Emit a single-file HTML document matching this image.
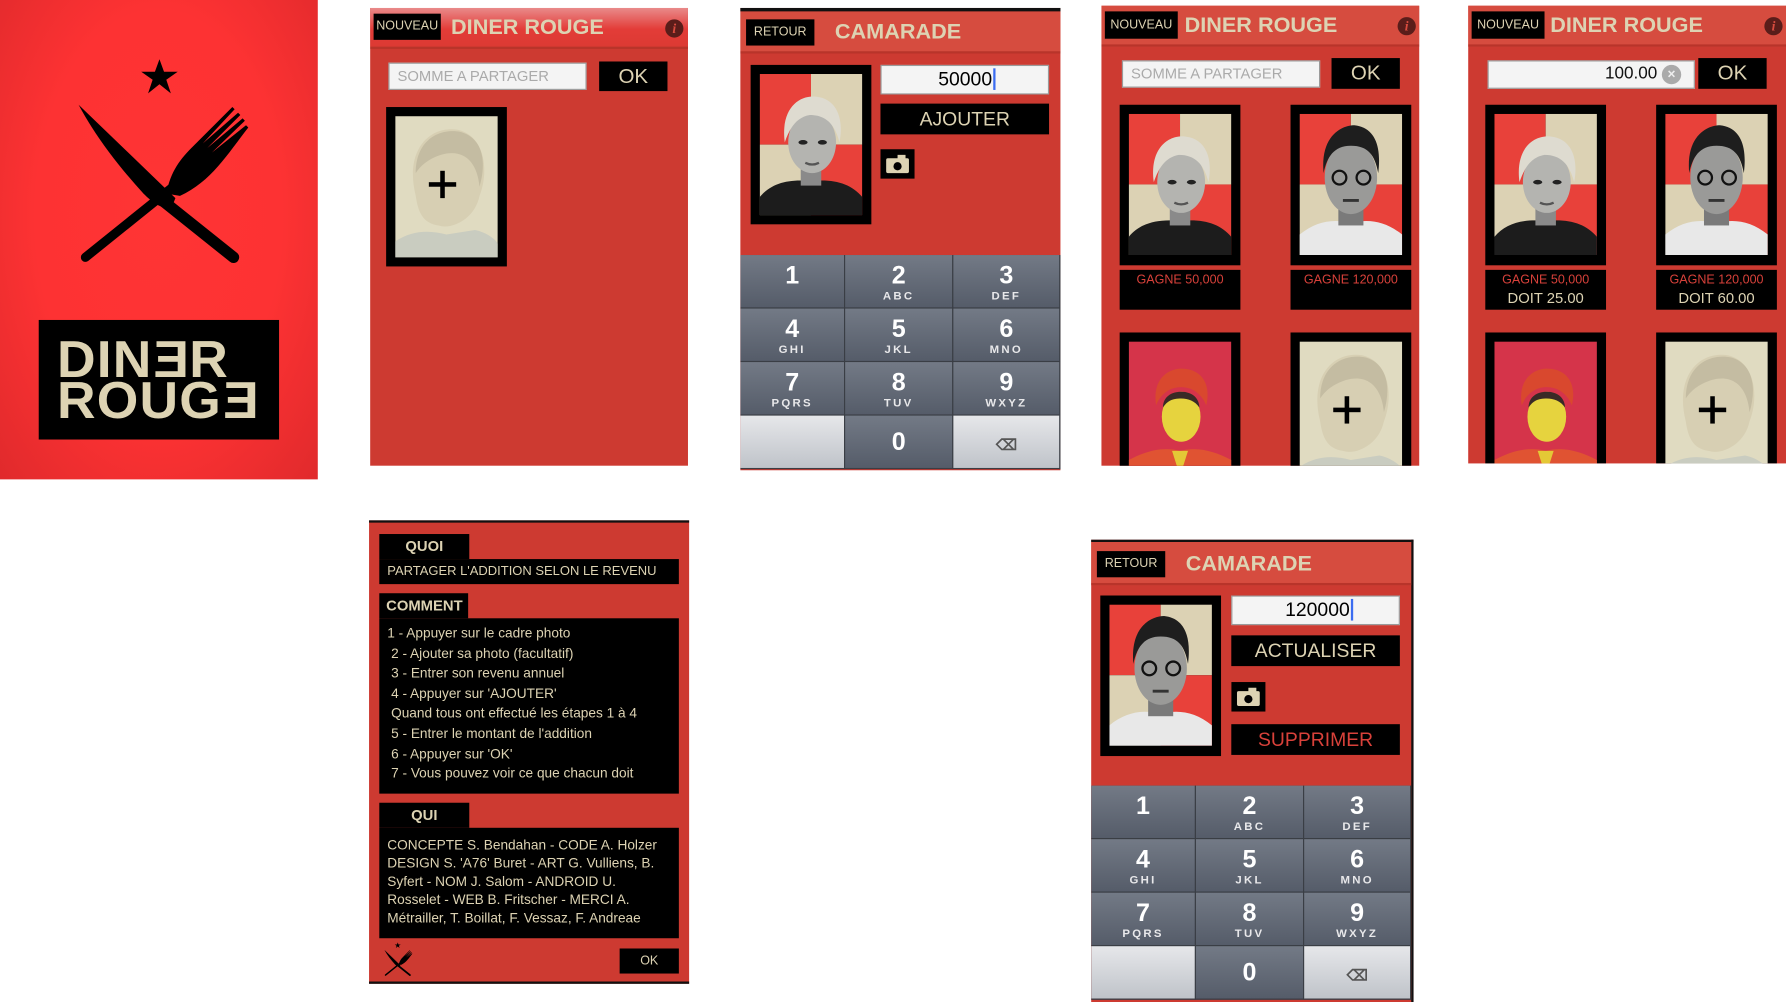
<!DOCTYPE html>
<html><head><meta charset="utf-8">
<style>
*{margin:0;padding:0;box-sizing:border-box}
html,body{width:1786px;height:1002px;overflow:hidden;background:#fff}
#w{position:absolute;left:0;top:0;width:1568px;height:880px;transform:scale(1.13903,1.13864);transform-origin:0 0;font-family:"Liberation Sans",sans-serif}
.a{position:absolute}
.scr{position:absolute;background:#cd3a31;overflow:hidden}
.hdr{position:absolute;left:0;right:0;top:0;height:36px;background:linear-gradient(#e06a5e,#d84c3f 60%,#d8463a);border-bottom:2px solid #b8342a}
.hdr2{background:#d64c3f}
.bk{position:absolute;background:#000;color:#ddd3b3;text-align:center}
.ttl{position:absolute;color:#ddd3b3;font-weight:bold;font-size:19px}
.info{position:absolute;width:16px;height:16px;border-radius:50%;background:#5a1d1a;color:#d84c3f;font:italic bold 12px "Liberation Serif",serif;text-align:center;line-height:16px}
.inp{position:absolute;background:#f4f4f4;border:1.5px solid #9a9a9a;color:#aaa;font-size:13px;line-height:21px;padding-left:7px}
.card{position:absolute;background:#000;width:106px;height:141px}
.card svg{position:absolute;left:8px;top:8px;width:90px;height:124px}
.kp{position:absolute;display:grid;grid-template-columns:92px 95px 94px;grid-template-rows:repeat(4,47px);gap:0;background:#3a3e45}
.kp div{background:linear-gradient(#737a86,#555c69);color:#fff;text-align:center;border-right:1px solid #3a3e45;border-bottom:1px solid #3a3e45;font-weight:bold;font-size:22px;line-height:22px;padding-top:7px}
.kp div small{display:block;font-size:10px;line-height:11px;letter-spacing:2px;color:#e8e8ea;margin-top:2px}
.kp div.l{background:linear-gradient(#e6e7ea,#bfc3c9)}
.lab{position:absolute;background:#000;width:106px;height:35px;text-align:center;font-size:11px}
.lab .r{color:#d8413a;margin-top:3px}
.lab .d{color:#ddd3b3;font-size:13px;margin-top:2px}
.help .t{position:absolute;background:#000;color:#ddd3b3;font-weight:bold;font-size:13px}
.help .b{position:absolute;background:#000;color:#ddd3b3;font-size:12px;white-space:nowrap}
</style></head><body>
<svg width="0" height="0" style="position:absolute">
<defs>
<symbol id="wom" viewBox="0 0 90 124">
<rect width="45" height="62" fill="#e8413a"/><rect x="45" width="45" height="62" fill="#dcd2b4"/>
<rect y="62" width="45" height="62" fill="#dcd2b4"/><rect x="45" y="62" width="45" height="62" fill="#e8413a"/>
<path d="M0,124 L0,108 C10,96 25,92 45,94 C65,92 80,96 90,108 L90,124Z" fill="#1c1c1c"/>
<rect x="36" y="80" width="18" height="18" fill="#8a8a8a"/>
<ellipse cx="46" cy="60" rx="21" ry="27" fill="#b4b4b0"/>
<path d="M22,60 C18,30 35,18 50,20 C68,22 74,40 70,60 C66,44 58,36 44,36 C32,38 26,48 22,60Z" fill="#dedbd0"/>
<ellipse cx="38" cy="60" rx="4" ry="2" fill="#222"/><ellipse cx="55" cy="60" rx="4" ry="2" fill="#222"/>
<path d="M40,78 Q46,81 52,78" stroke="#555" stroke-width="2" fill="none"/>
</symbol>
<symbol id="man" viewBox="0 0 90 124">
<rect width="45" height="62" fill="#e8413a"/><rect x="45" width="45" height="62" fill="#dcd2b4"/>
<rect y="62" width="45" height="62" fill="#dcd2b4"/><rect x="45" y="62" width="45" height="62" fill="#e8413a"/>
<path d="M0,124 L0,106 C15,94 30,92 45,96 C60,92 75,94 90,106 L90,124Z" fill="#e8e8e8"/>
<rect x="34" y="80" width="22" height="18" fill="#7a7a7a"/>
<ellipse cx="45" cy="56" rx="23" ry="32" fill="#9a9a98"/>
<path d="M21,52 C18,18 38,10 48,10 C66,12 72,28 69,52 C66,36 60,28 45,28 C30,28 24,38 21,52Z" fill="#1e1e1e"/>
<circle cx="35" cy="56" r="6" fill="none" stroke="#111" stroke-width="2"/><circle cx="56" cy="56" r="6" fill="none" stroke="#111" stroke-width="2"/>
<path d="M38,76 L52,76" stroke="#333" stroke-width="2.5"/>
</symbol>
<symbol id="ph" viewBox="0 0 90 124">
<rect width="90" height="124" fill="#e0dbc1"/>
<path d="M18,70 C8,30 30,8 55,12 C80,18 82,50 74,70 C70,90 50,100 38,96 C24,94 20,84 18,70Z" fill="#d7cfb3"/>
<path d="M18,50 C18,20 40,10 58,14 C78,20 80,42 74,62 C72,40 60,28 40,34 C28,38 22,44 18,50Z" fill="#c4bca2"/>
<path d="M0,124 L0,110 C15,100 30,100 45,104 L70,100 C80,102 88,108 90,112 L90,124Z" fill="#c9ccc0"/>
<rect x="39.5" y="48" width="4" height="24" fill="#000"/><rect x="29.5" y="58" width="24" height="4" fill="#000"/>
</symbol>
<symbol id="pt" viewBox="0 0 90 124">
<rect width="90" height="124" fill="#d5344a"/>
<path d="M0,124 L0,104 C15,96 30,92 45,96 C60,92 75,96 90,104 L90,124Z" fill="#e05332"/>
<path d="M38,96 L45,118 L52,96Z" fill="#e4c836"/>
<ellipse cx="46" cy="66" rx="17" ry="22" fill="#e6d33e"/>
<path d="M24,56 C20,30 38,22 50,24 C66,26 72,40 68,56 C64,46 56,40 46,40 C36,40 28,46 24,56Z" fill="#d9482e"/>
<path d="M30,58 C30,48 38,44 46,44 C56,44 62,50 62,58 C58,52 52,50 46,50 C38,50 34,52 30,58Z" fill="#3a2a26"/>
</symbol>
<symbol id="cam" viewBox="0 0 30 26">
<rect width="30" height="26" fill="#000"/>
<rect x="5" y="8" width="20" height="13" rx="1.5" fill="#ddd3b3"/><rect x="15" y="5" width="7" height="4" fill="#ddd3b3"/>
<circle cx="15" cy="15" r="3.6" fill="#000"/>
</symbol>
<symbol id="kf" viewBox="60 50 170 190">
<polygon points="140,52 144,63 156,63 146,70 150,82 140,74 130,82 134,70 124,63 136,63" fill="#000"/>
<path d="M69,92 L154,174 L150,184 C140,182 134,178 126,170 C104,146 84,120 69,92Z" fill="#000"/>
<line x1="145" y1="178" x2="205" y2="226" stroke="#000" stroke-width="10" stroke-linecap="round"/>
<line x1="75" y1="226" x2="152" y2="164" stroke="#000" stroke-width="8" stroke-linecap="round"/>
<path d="M146,170 C150,150 158,140 170,128 L204,94 L206,96 L178,126 L209,99 L211,101 L182,130 L213,104 L215,106 L186,134 L216,110 L218,112 C200,135 185,160 158,172Z" fill="#000"/>
</symbol>
</defs></svg>
<div id="w">

<!-- Splash -->
<div class="a" style="left:0;top:0;width:279px;height:421px;background:radial-gradient(ellipse at 50% 45%,#ff3434 0%,#fd3233 55%,#e02a2c 100%)">
<svg class="a" style="left:60px;top:50px;width:170px;height:190px"><use href="#kf"/></svg>
<div class="a" style="left:34px;top:281px;width:211px;height:105px;background:#000;color:#ddd3b3;font-weight:bold;font-size:46px;line-height:36px;letter-spacing:1px;padding:16px 0 0 16px">
<div style="transform:scaleX(1.02);transform-origin:0 0;white-space:nowrap">DIN<span style="display:inline-block;transform:scaleX(-1)">E</span>R</div>
<div style="transform:scaleX(1.02);transform-origin:0 0;white-space:nowrap">ROUG<span style="display:inline-block;transform:scaleX(-1)">E</span></div>
</div>
</div>

<!-- Screen B -->
<div class="scr" style="left:325px;top:7px;width:279px;height:402px">
<div class="hdr" style="background:linear-gradient(#e98a8a,#e33c38 55%,#dc3a33)"></div>
<div class="bk" style="left:3px;top:5px;width:59px;height:23px;font-size:11px;line-height:23px">NOUVEAU</div>
<div class="ttl" style="left:71px;top:7px">DINER ROUGE</div>
<div class="info" style="left:259px;top:10px">i</div>
<div class="inp" style="left:16px;top:48px;width:174px;height:24px">SOMME A PARTAGER</div>
<div class="bk" style="left:201px;top:47px;width:60px;height:26px;font-size:18px;line-height:26px">OK</div>
<div class="card" style="left:14px;top:87px;height:140px"><svg><use href="#ph"/></svg></div>
</div>

<!-- Screen C -->
<div class="scr" style="left:650px;top:7px;width:281px;height:406px;border-top:3px solid #111">
<div class="hdr hdr2" style="height:37px"></div>
<div class="bk" style="left:5px;top:7px;width:60px;height:23px;font-size:11px;line-height:23px">RETOUR</div>
<div class="ttl" style="left:83px;top:8px">CAMARADE</div>
<div class="card" style="left:9px;top:47px;height:140px"><svg><use href="#wom"/></svg></div>
<div class="inp" style="left:123px;top:47px;width:148px;height:26px;color:#000;font-size:17px;line-height:23px;text-align:right;padding-right:46px">50000<span style="border-left:2px solid #3b6cf0;margin-left:1px"></span></div>
<div class="bk" style="left:123px;top:81px;width:148px;height:27px;font-size:17px;line-height:27px">AJOUTER</div>
<svg class="a" style="left:123px;top:121px;width:30px;height:26px"><use href="#cam"/></svg>
<div class="kp" style="left:0;top:214px"><div>1</div><div>2<small>ABC</small></div><div>3<small>DEF</small></div><div>4<small>GHI</small></div><div>5<small>JKL</small></div><div>6<small>MNO</small></div><div>7<small>PQRS</small></div><div>8<small>TUV</small></div><div>9<small>WXYZ</small></div><div class="l"></div><div style="padding-top:12px">0</div><div class="l" style="color:#555;font-size:13px;padding-top:15px">&#9003;</div></div>
</div>

<!-- Screen D -->
<div class="scr" style="left:967px;top:5px;width:279px;height:404px">
<div class="hdr hdr2"></div>
<div class="bk" style="left:3px;top:5px;width:64px;height:24px;font-size:11px;line-height:24px">NOUVEAU</div>
<div class="ttl" style="left:73px;top:7px">DINER ROUGE</div>
<div class="info" style="left:260px;top:10px">i</div>
<div class="inp" style="left:18px;top:48px;width:174px;height:24px">SOMME A PARTAGER</div>
<div class="bk" style="left:202px;top:46px;width:60px;height:27px;font-size:18px;line-height:27px">OK</div>
<div class="card" style="left:16px;top:87px"><svg><use href="#wom"/></svg></div>
<div class="card" style="left:166px;top:87px"><svg><use href="#man"/></svg></div>
<div class="lab" style="left:16px;top:232px"><div class="r">GAGNE 50,000</div></div>
<div class="lab" style="left:166px;top:232px"><div class="r">GAGNE 120,000</div></div>
<div class="card" style="left:16px;top:287px"><svg><use href="#pt"/></svg></div>
<div class="card" style="left:166px;top:287px"><svg><use href="#ph"/></svg></div>
</div>

<!-- Screen E -->
<div class="scr" style="left:1289px;top:5px;width:279px;height:402px">
<div class="hdr hdr2"></div>
<div class="bk" style="left:3px;top:5px;width:64px;height:24px;font-size:11px;line-height:24px">NOUVEAU</div>
<div class="ttl" style="left:72px;top:7px">DINER ROUGE</div>
<div class="info" style="left:260px;top:10px">i</div>
<div class="inp" style="left:17px;top:48px;width:182px;height:25px;color:#111;font-size:15px;text-align:right;padding-right:32px">100.00</div>
<div class="a" style="left:170px;top:52px;width:17px;height:17px;border-radius:50%;background:#aaa;color:#eee;font-size:12px;line-height:17px;text-align:center;font-weight:bold">×</div>
<div class="bk" style="left:202px;top:46px;width:60px;height:27px;font-size:18px;line-height:27px">OK</div>
<div class="card" style="left:15px;top:87px"><svg><use href="#wom"/></svg></div>
<div class="card" style="left:165px;top:87px"><svg><use href="#man"/></svg></div>
<div class="lab" style="left:15px;top:232px"><div class="r">GAGNE 50,000</div><div class="d">DOIT 25.00</div></div>
<div class="lab" style="left:165px;top:232px"><div class="r">GAGNE 120,000</div><div class="d">DOIT 60.00</div></div>
<div class="card" style="left:15px;top:287px"><svg><use href="#pt"/></svg></div>
<div class="card" style="left:165px;top:287px"><svg><use href="#ph"/></svg></div>
</div>

<!-- Help -->
<div class="scr help" style="left:324px;top:457px;width:281px;height:407px;border-top:2px solid #111;border-bottom:2px solid #111">
<div class="t" style="left:9px;top:10px;width:79px;height:22px;text-align:center;line-height:22px">QUOI</div>
<div class="b" style="left:9px;top:32px;width:263px;height:22px;line-height:22px;padding-left:7px;font-size:11.4px">PARTAGER L'ADDITION SELON LE REVENU</div>
<div class="t" style="left:9px;top:62px;width:78px;height:22px;line-height:22px;padding-left:6px">COMMENT</div>
<div class="b" style="left:9px;top:84px;width:263px;height:154px;padding:5px 0 0 7px;line-height:17.6px">1 - Appuyer sur le cadre photo<br>&nbsp;2 - Ajouter sa photo (facultatif)<br>&nbsp;3 - Entrer son revenu annuel<br>&nbsp;4 - Appuyer sur 'AJOUTER'<br>&nbsp;Quand tous ont effectué les étapes 1 à 4<br>&nbsp;5 - Entrer le montant de l'addition<br>&nbsp;6 - Appuyer sur 'OK'<br>&nbsp;7 - Vous pouvez voir ce que chacun doit</div>
<div class="t" style="left:9px;top:246px;width:79px;height:22px;text-align:center;line-height:22px">QUI</div>
<div class="b" style="left:9px;top:268px;width:263px;height:97px;padding:7px 0 0 7px;line-height:16px">CONCEPTE S. Bendahan - CODE A. Holzer<br>DESIGN S. 'A76' Buret - ART G. Vulliens, B.<br>Syfert - NOM J. Salom - ANDROID U.<br>Rosselet - WEB B. Fritscher - MERCI A.<br>Métrailler, T. Boillat, F. Vessaz, F. Andreae</div>
<svg class="a" style="left:12px;top:367px;width:28px;height:34px"><use href="#kf"/></svg>
<div class="bk" style="left:220px;top:374px;width:52px;height:22px;font-size:11px;line-height:22px">OK</div>
</div>

<!-- Screen G -->
<div class="scr" style="left:958px;top:474px;width:283px;height:406px;border-top:2px solid #111;border-right:2px solid #111">
<div class="hdr hdr2" style="height:38px"></div>
<div class="bk" style="left:5px;top:8px;width:60px;height:23px;font-size:11px;line-height:23px">RETOUR</div>
<div class="ttl" style="left:83px;top:9px">CAMARADE</div>
<div class="card" style="left:8px;top:47px;width:106px;height:141px"><svg><use href="#man"/></svg></div>
<div class="inp" style="left:123px;top:47px;width:148px;height:26px;color:#000;font-size:17px;line-height:23px;text-align:right;padding-right:40px">120000<span style="border-left:2px solid #3b6cf0;margin-left:1px"></span></div>
<div class="bk" style="left:123px;top:82px;width:148px;height:27px;font-size:17px;line-height:27px">ACTUALISER</div>
<svg class="a" style="left:123px;top:123px;width:30px;height:26px"><use href="#cam"/></svg>
<div class="bk" style="left:123px;top:160px;width:148px;height:27px;font-size:17px;line-height:27px;color:#d8413a">SUPPRIMER</div>
<div class="kp" style="left:0;top:214px"><div>1</div><div>2<small>ABC</small></div><div>3<small>DEF</small></div><div>4<small>GHI</small></div><div>5<small>JKL</small></div><div>6<small>MNO</small></div><div>7<small>PQRS</small></div><div>8<small>TUV</small></div><div>9<small>WXYZ</small></div><div class="l"></div><div style="padding-top:12px">0</div><div class="l" style="color:#555;font-size:13px;padding-top:15px">&#9003;</div></div>
</div>

</div>
</body></html>
